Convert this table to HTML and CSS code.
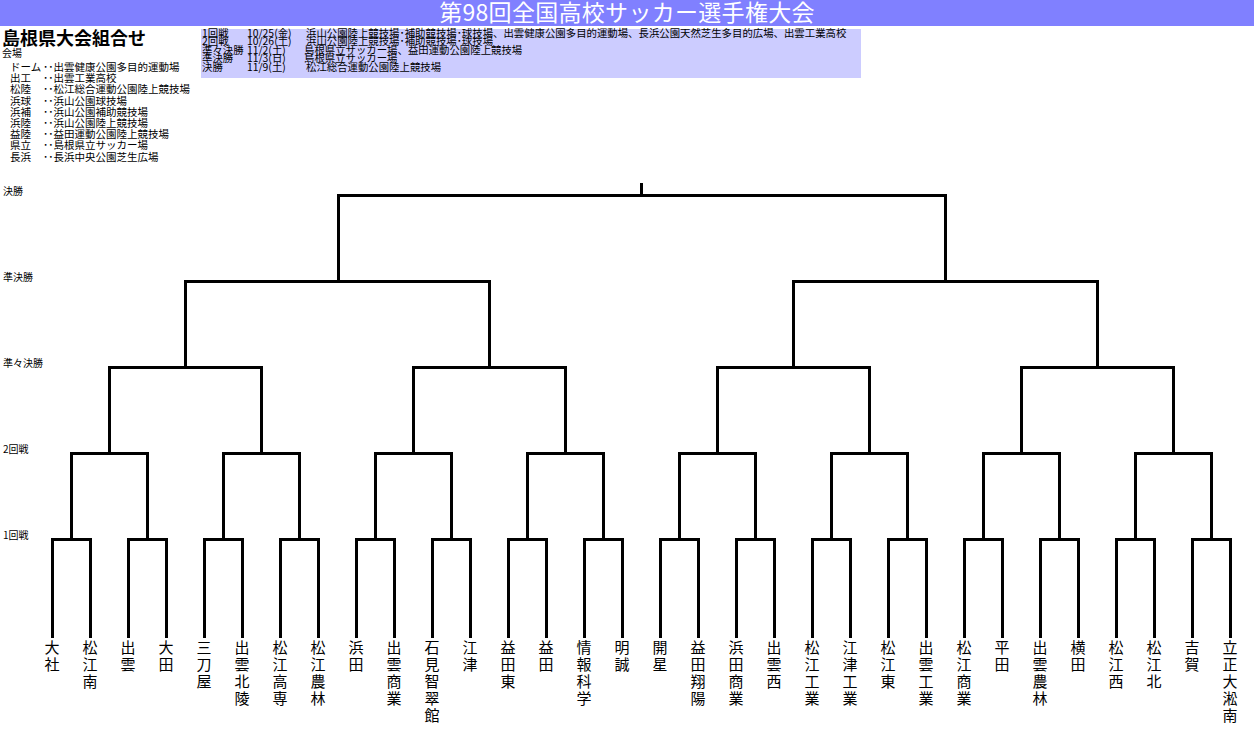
FILE: index.html
```html
<!DOCTYPE html>
<html lang="ja">
<head>
<meta charset="utf-8">
<title>第98回全国高校サッカー選手権大会</title>
<link rel="stylesheet" href="styles.css">
</head>
<body>
<header class="titlebar"><span class="title-text">第98回全国高校サッカー選手権大会</span></header>
<section class="top">
  <div class="left">
    <h1 class="heading">島根県大会組合せ</h1>
    <div class="venue-title">会場</div>
    <ul class="venues">
      <li><span class="abbr">ドーム</span>･･出雲健康公園多目的運動場</li>
      <li><span class="abbr">出工</span>･･出雲工業高校</li>
      <li><span class="abbr">松陸</span>･･松江総合運動公園陸上競技場</li>
      <li><span class="abbr">浜球</span>･･浜山公園球技場</li>
      <li><span class="abbr">浜補</span>･･浜山公園補助競技場</li>
      <li><span class="abbr">浜陸</span>･･浜山公園陸上競技場</li>
      <li><span class="abbr">益陸</span>･･益田運動公園陸上競技場</li>
      <li><span class="abbr">県立</span>･･島根県立サッカー場</li>
      <li><span class="abbr">長浜</span>･･長浜中央公園芝生広場</li>
    </ul>
  </div>
  <div class="info">
    <div class="row"><span class="rnd">1回戦</span><span class="date">10/25(金)</span><span>浜山公園陸上競技場･補助競技場･球技場、出雲健康公園多目的運動場、長浜公園天然芝生多目的広場、出雲工業高校</span></div>
    <div class="row"><span class="rnd">2回戦</span><span class="date">10/26(土)</span><span>浜山公園陸上競技場･補助競技場･球技場</span></div>
    <div class="row"><span class="rnd">準々決勝</span><span class="date short">11/2(土)</span><span>島根県立サッカー場、益田運動公園陸上競技場</span></div>
    <div class="row"><span class="rnd">準決勝</span><span class="date short">11/3(日)</span><span>島根県立サッカー場</span></div>
    <div class="row"><span class="rnd">決勝</span><span class="date">11/9(土)</span><span>松江総合運動公園陸上競技場</span></div>
  </div>
</section>
<section class="bracket">
  <div class="levels">
    <div class="level">決勝</div>
    <div class="level">準決勝</div>
    <div class="level">準々決勝</div>
    <div class="level">2回戦</div>
    <div class="level">1回戦</div>
  </div>
  <svg class="lines" width="1254" height="463" viewBox="0 175 1254 463" xmlns="http://www.w3.org/2000/svg">
    <path fill="none" stroke="#000" stroke-width="3" stroke-linejoin="miter" d="
      M52.5 638 V539.5 H90.5 V638
      M128.5 638 V539.5 H166.5 V638
      M204.5 638 V539.5 H242.5 V638
      M280.5 638 V539.5 H318.5 V638
      M356.5 638 V539.5 H394.5 V638
      M432.5 638 V539.5 H470.5 V638
      M508.5 638 V539.5 H546.5 V638
      M584.5 638 V539.5 H622.5 V638
      M660.5 638 V539.5 H698.5 V638
      M736.5 638 V539.5 H774.5 V638
      M812.5 638 V539.5 H850.5 V638
      M888.5 638 V539.5 H926.5 V638
      M964.5 638 V539.5 H1002.5 V638
      M1040.5 638 V539.5 H1078.5 V638
      M1116.5 638 V539.5 H1154.5 V638
      M1192.5 638 V539.5 H1230.5 V638
      M71.5 539.5 V453.5 H147.5 V539.5
      M223.5 539.5 V453.5 H299.5 V539.5
      M375.5 539.5 V453.5 H451.5 V539.5
      M527.5 539.5 V453.5 H603.5 V539.5
      M679.5 539.5 V453.5 H755.5 V539.5
      M831.5 539.5 V453.5 H907.5 V539.5
      M983.5 539.5 V453.5 H1059.5 V539.5
      M1135.5 539.5 V453.5 H1211.5 V539.5
      M109.5 453.5 V367.5 H261.5 V453.5
      M413.5 453.5 V367.5 H565.5 V453.5
      M717.5 453.5 V367.5 H869.5 V453.5
      M1021.5 453.5 V367.5 H1173.5 V453.5
      M185.5 367.5 V281.5 H489.5 V367.5
      M793.5 367.5 V281.5 H1097.5 V367.5
      M338.5 281.5 V195.5 H945.5 V281.5
      M641.5 195.5 V183"/>
  </svg>
</section>
<section class="teams">
  <div class="team"><span>大社</span></div>
  <div class="team"><span>松江南</span></div>
  <div class="team"><span>出雲</span></div>
  <div class="team"><span>大田</span></div>
  <div class="team"><span>三刀屋</span></div>
  <div class="team"><span>出雲北陵</span></div>
  <div class="team"><span>松江高専</span></div>
  <div class="team"><span>松江農林</span></div>
  <div class="team"><span>浜田</span></div>
  <div class="team"><span>出雲商業</span></div>
  <div class="team"><span>石見智翠館</span></div>
  <div class="team"><span>江津</span></div>
  <div class="team"><span>益田東</span></div>
  <div class="team"><span>益田</span></div>
  <div class="team"><span>情報科学</span></div>
  <div class="team"><span>明誠</span></div>
  <div class="team"><span>開星</span></div>
  <div class="team"><span>益田翔陽</span></div>
  <div class="team"><span>浜田商業</span></div>
  <div class="team"><span>出雲西</span></div>
  <div class="team"><span>松江工業</span></div>
  <div class="team"><span>江津工業</span></div>
  <div class="team"><span>松江東</span></div>
  <div class="team"><span>出雲工業</span></div>
  <div class="team"><span>松江商業</span></div>
  <div class="team"><span>平田</span></div>
  <div class="team"><span>出雲農林</span></div>
  <div class="team"><span>横田</span></div>
  <div class="team"><span>松江西</span></div>
  <div class="team"><span>松江北</span></div>
  <div class="team"><span>吉賀</span></div>
  <div class="team"><span>立正大淞南</span></div>
</section>
</body>
</html>
```

FILE: styles.css
```css
* { box-sizing: border-box; }
html, body { margin: 0; padding: 0; background: #fff; }
body {
  font-family: "Noto Sans CJK JP", "Noto Sans", sans-serif;
  color: #000;
  width: 1254px;
}
.titlebar {
  height: 26px;
  background: #8080ff;
  color: #fff;
  text-align: center;
  white-space: nowrap;
  display: flex;
  justify-content: center;
  align-items: flex-start;
}
.title-text {
  font-size: 23px;
  line-height: 22px;
  letter-spacing: 0.3px;
}
.top {
  display: flex;
  height: 149px;
}
.left {
  width: 201px;
  padding-left: 2px;
}
.heading {
  margin: 1px 0 0 0;
  font-size: 18px;
  line-height: 20px;
  font-weight: bold;
  white-space: nowrap;
}
.venue-title {
  margin-top: 1px;
  font-size: 10px;
  line-height: 10px;
}
.venues {
  list-style: none;
  margin: 3px 0 0 0;
  padding: 0 0 0 8px;
  font-size: 10.5px;
  line-height: 11.2px;
  white-space: nowrap;
}
.abbr {
  display: inline-block;
  width: 33px;
}
.info {
  margin-top: 3px;
  width: 660px;
  height: 49px;
  background: #ccccff;
  padding-left: 1px;
  font-size: 10.4px;
  line-height: 8.4px;
  white-space: nowrap;
}
.row { display: flex; }
.rnd { width: 45px; flex: none; }
.date { width: 59px; flex: none; }
.date.short { width: 57px; }
.bracket {
  position: relative;
  height: 463px;
}
.levels {
  display: flex;
  flex-direction: column;
  gap: 76px;
  padding: 11px 0 0 3px;
}
.level {
  font-size: 10px;
  line-height: 10px;
  height: 10px;
  white-space: nowrap;
}
.lines {
  position: absolute;
  top: 0;
  left: 0;
  display: block;
}
.teams {
  display: flex;
  padding-left: 33px;
}
.team {
  width: 38px;
  flex: none;
  display: flex;
  justify-content: center;
}
.team span {
  width: 15px;
  font-size: 15px;
  line-height: 17px;
  word-break: break-all;
  text-align: center;
}
```
